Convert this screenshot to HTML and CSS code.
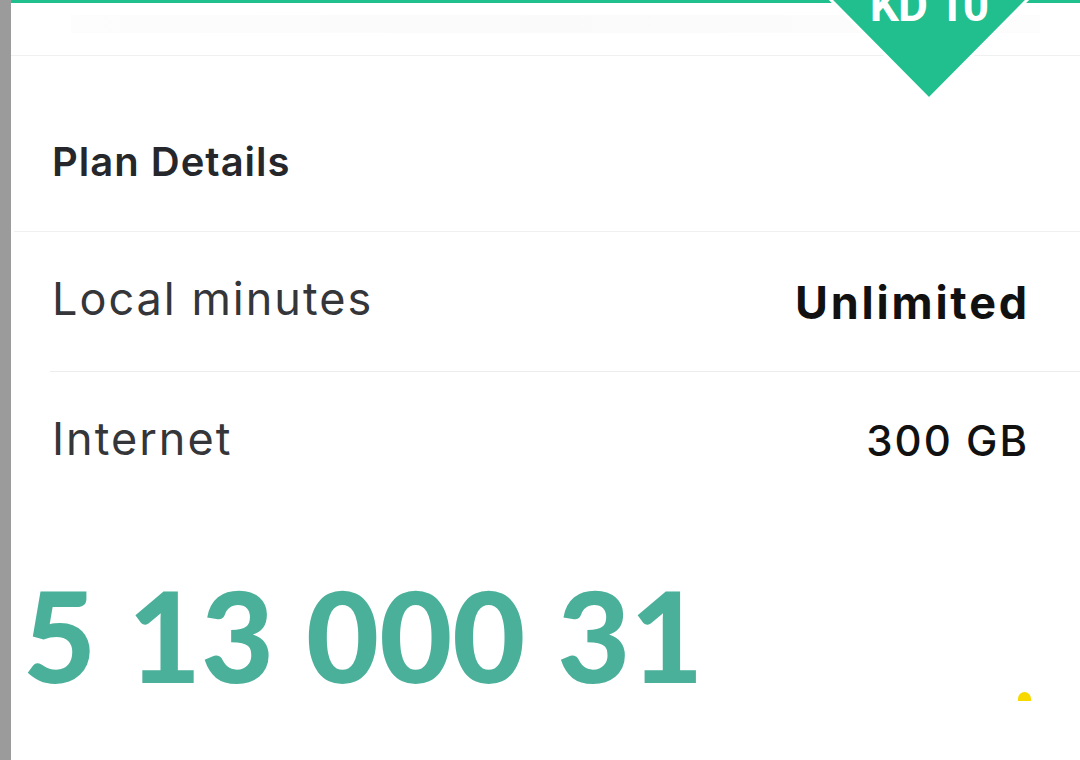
FILE: index.html
```html
<!DOCTYPE html>
<html>
	<head>
		<title>Plan Details</title>
		<link rel="stylesheet" href="styles.css">
	</head>
	<body>
		<div class="frame">
			<div class="strip"></div>

			<main class="screen">
				<header class="topbar">
					<div class="shade"></div>
				</header>

				<!-- price tag hanging from the top bar -->
				<div class="badge">
					<svg width="206" height="102" viewBox="0 0 206 102">
						<polygon points="3,-2 203,-2 103,99" fill="#21bf8e" stroke="#ffffff" stroke-width="3" />
					</svg>
					<span class="badge-text">KD 10</span>
				</div>

				<section class="plan-head">
					<h2>Plan Details</h2>
				</section>

				<ul class="plan-list">
					<li class="plan-row">
						<span class="label">Local minutes</span>
						<span class="value bold">Unlimited</span>
					</li>
					<li class="plan-row last">
						<span class="label">Internet</span>
						<span class="value">300 GB</span>
					</li>
				</ul>

				<div class="number">5 13 000 31</div>

				<span class="dot"></span>
			</main>
		</div>
	</body>
</html>
```

FILE: styles.css
```css
html, body {
	margin: 0;
	padding: 0;
	background-color: white;
}

body {
	font-family: Inter, "Noto Sans", sans-serif;
	width: 1080px;
	height: 760px;
	overflow: hidden;
}

div.frame {
	display: flex;
	height: 760px;
}

div.strip {
	width: 11px;
	flex-shrink: 0;
	background-color: #9b9b9b;
}

main.screen {
	flex: 1;
	position: relative;
	overflow: hidden;
}

/* green line on top, faint divider below */
header.topbar {
	border-top: 3px solid #21bf8e;
	border-bottom: 1px solid #f0f0f0;
	padding: 12px 40px 0 60px;
	height: 40px;
}

div.shade {
	height: 18px;
	background: linear-gradient(90deg, #fbfbfb, #f7f7f7 50%, #fbfbfb);
	opacity: 0.6;
}

div.badge {
	position: absolute;
	top: 0;
	left: 815px;
	width: 206px;
	height: 102px;
}

div.badge svg {
	display: block;
}

span.badge-text {
	position: absolute;
	top: -22px;
	left: 0;
	width: 100%;
	text-align: center;
	color: white;
	font-family: Roboto, sans-serif;
	font-weight: 700;
	font-size: 46px;
	line-height: 54px;
	letter-spacing: -1px;
}

section.plan-head {
	margin-left: 3px;
	padding: 82px 0 45px 38px;
	border-bottom: 1px solid #f0f0f0;
}

section.plan-head h2 {
	margin: 0;
	font-size: 40px;
	line-height: 48px;
	font-weight: 600;
	color: #25272b;
	letter-spacing: 1px;
}

ul.plan-list {
	list-style: none;
	margin: 0;
	padding: 0;
}

li.plan-row {
	display: flex;
	justify-content: space-between;
	align-items: flex-start;
	margin-left: 39px;
	padding: 40px 53px 41px 2px;
	border-bottom: 1px solid #ededed;
}

li.plan-row.last {
	border-bottom: none;
	padding-bottom: 92px;
}

span.label {
	font-size: 45px;
	line-height: 54px;
	color: #34363a;
	letter-spacing: 2px;
}

span.value {
	font-size: 42px;
	line-height: 54px;
	font-weight: 500;
	color: #111111;
	margin-top: 2px;
	letter-spacing: 2px;
	margin-right: -2px;
}

span.value.bold {
	font-size: 45px;
	font-weight: 700;
	margin-top: 4px;
	letter-spacing: 2.8px;
	margin-right: -3px;
}

div.number {
	padding-left: 12px;
	font-family: Lato, sans-serif;
	font-weight: 900;
	font-size: 126px;
	line-height: 150px;
	color: #4bb09a;
	word-spacing: 2px;
}

span.dot {
	position: absolute;
	left: 1007px;
	top: 692px;
	width: 13px;
	height: 9px;
	border-radius: 7px 7px 0 0;
	background-color: #f7d900;
}
```
